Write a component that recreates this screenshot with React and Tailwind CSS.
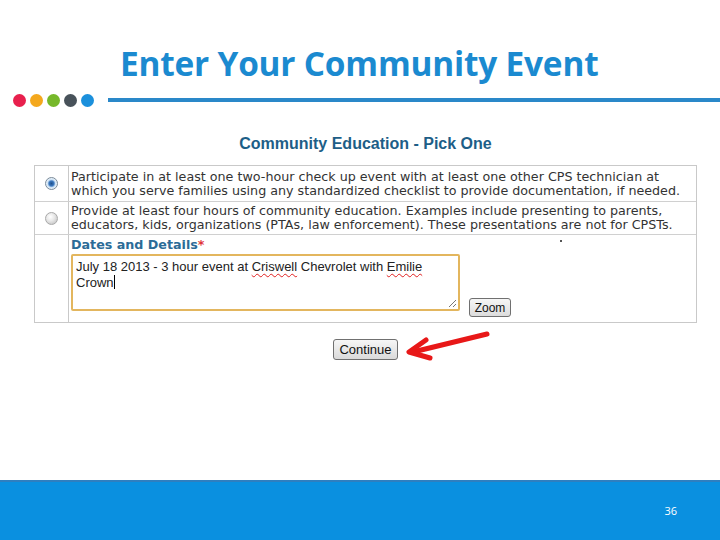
import React from "react";

const verdana = { fontFamily: '"DejaVu Sans", Verdana, sans-serif' };

export default function App() {
  return (
    <div className="relative w-[720px] h-[540px] overflow-hidden bg-white flex flex-col">
      {/* Title */}
      <div className="h-[92px] flex items-end pl-[120px] pb-[12px]">
        <h1
          className="text-[33.4px] leading-none font-bold text-[#1b8ad0] tracking-[-0.2px]"
          style={{ fontFamily: '"Open Sans", sans-serif' }}
        >
          Enter Your Community Event
        </h1>
      </div>
      {/* dots + rule */}
      <div className="flex items-center h-[16px] pl-[13px]">
        <div className="flex gap-[4px]">
          <span className="w-[13px] h-[13px] rounded-full bg-[#e8204d]" />
          <span className="w-[13px] h-[13px] rounded-full bg-[#f4a81d]" />
          <span className="w-[13px] h-[13px] rounded-full bg-[#76b82a]" />
          <span className="w-[13px] h-[13px] rounded-full bg-[#48525a]" />
          <span className="w-[13px] h-[13px] rounded-full bg-[#1b90dc]" />
        </div>
        <div className="ml-[14px] flex-1 h-[4px] bg-[#2a88c9]" />
      </div>

      {/* subtitle */}
      <div
        className="mt-[26px] w-[663px] ml-[34px] text-center text-[16px] font-bold text-[#1d5e87] leading-[20px]"
        style={{ fontFamily: '"Liberation Sans", Arial, sans-serif' }}
      >
        Community Education - Pick One
      </div>

      {/* table */}
      <div
        className="mt-[11px] ml-[34px] w-[663px] border border-[#c9c9c9] text-[12.7px] text-[#333] leading-[14px] whitespace-nowrap"
        style={verdana}
      >
        <div className="flex h-[36px] border-b border-[#d0d0d0]">
          <div className="w-[34px] border-r border-[#c9c9c9] flex items-center justify-center">
            <span className="w-[13px] h-[13px] rounded-full border border-[#7a8a99] bg-[radial-gradient(circle,#1f4f8a_0,#3b78c0_2.5px,#cfe3f5_4px,#f2f7fb_6px)]" />
          </div>
          <div className="flex-1 pl-[2px] pt-[4px]">
            Participate in at least one two-hour check up event with at least one other CPS technician at
            <br />
            which you serve families using any standardized checklist to provide documentation, if needed.
          </div>
        </div>
        <div className="flex h-[33px] border-b border-[#d0d0d0]">
          <div className="w-[34px] border-r border-[#c9c9c9] flex items-center justify-center">
            <span className="w-[13px] h-[13px] rounded-full border border-[#a9a9a9] bg-[radial-gradient(circle_at_40%_35%,#ffffff_0,#e8e8e8_4px,#cfcfcf_7px)]" />
          </div>
          <div className="flex-1 pl-[2px] pt-[2px]">
            Provide at least four hours of community education. Examples include presenting to parents,
            <br />
            educators, kids, organizations (PTAs, law enforcement). These presentations are not for CPSTs.
          </div>
        </div>
        <div className="flex h-[87px]">
          <div className="w-[34px] border-r border-[#c9c9c9]" />
          <div className="flex-1 pl-[2px] pt-[3px] relative">
            <div className="font-bold text-[#2b6b97] leading-[14px]">
              Dates and Details<span className="text-[#e0343a]">*</span>
            </div>
            <span className="absolute left-[491px] top-[5px] w-[2px] h-[2px] bg-[#555]" />
            <div className="flex items-end mt-[2px]">
              <div
                className="relative w-[389px] h-[57px] border-2 border-[#e3b65e] rounded-[2px] px-[3px] pt-[3px] text-[13px] leading-[16px] text-[#222]"
                style={{ fontFamily: '"Liberation Sans", Arial, sans-serif' }}
              >
                July 18 2013 - 3 hour event at{" "}
                <span className="underline decoration-wavy decoration-[#e02020] decoration-[1px] underline-offset-[2px]">Criswell</span>{" "}
                Chevrolet with{" "}
                <span className="underline decoration-wavy decoration-[#e02020] decoration-[1px] underline-offset-[2px]">Emilie</span>
                <br />
                Crown<span className="inline-block w-[1px] h-[14px] bg-black align-[-2px]" />
                <svg className="absolute right-[1px] bottom-[1px]" width="9" height="9" viewBox="0 0 9 9">
                  <line x1="8" y1="1" x2="1" y2="8" stroke="#777" strokeWidth="1" />
                  <line x1="8" y1="5" x2="5" y2="8" stroke="#777" strokeWidth="1" />
                </svg>
              </div>
              <button
                className="ml-[9px] mb-[-6px] w-[42px] h-[19px] border border-[#707070] rounded-[3px] bg-gradient-to-b from-[#f6f6f6] to-[#dcdcdc] text-[12px] leading-none text-[#111]"
                style={{ fontFamily: '"Liberation Sans", Arial, sans-serif' }}
              >
                Zoom
              </button>
            </div>
          </div>
        </div>
      </div>

      {/* continue */}
      <div className="mt-[16px] ml-[34px] w-[663px] flex justify-center">
        <button
          className="w-[65px] h-[21px] border border-[#707070] rounded-[3px] bg-gradient-to-b from-[#f6f6f6] to-[#dadada] text-[13px] leading-none text-[#111]"
          style={{ fontFamily: '"Liberation Sans", Arial, sans-serif' }}
        >
          Continue
        </button>
      </div>

      {/* annotation arrow */}
      <svg className="absolute left-[400px] top-[325px]" width="95" height="40" viewBox="0 0 95 40">
        <line x1="87" y1="9" x2="13" y2="27" stroke="#e81818" strokeWidth="5" strokeLinecap="round" />
        <polyline points="26,15 9,27 30,33" fill="none" stroke="#e81818" strokeWidth="5" strokeLinecap="round" strokeLinejoin="round" />
      </svg>

      {/* footer */}
      <div className="mt-auto h-[60px] bg-[#0a90e0] border-t-2 border-[#2e7fc0] flex items-center justify-end pr-[43px]">
        <span
          className="text-[11px] text-white"
          style={{ fontFamily: '"Open Sans", sans-serif' }}
        >
          36
        </span>
      </div>
    </div>
  );
}
